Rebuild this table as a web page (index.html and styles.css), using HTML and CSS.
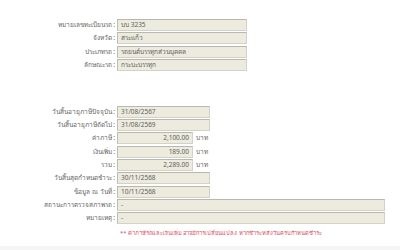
FILE: index.html
```html
<!DOCTYPE html>
<html lang="th">
<head>
<meta charset="utf-8">
<link rel="stylesheet" href="styles.css">
</head>
<body>
<div class="page">
  <div class="form">
    <div class="label">หมายเลขทะเบียนรถ :</div><div class="box w-130">บบ 3235</div>
    <div class="label">จังหวัด :</div><div class="box w-130">สระแก้ว</div>
    <div class="label">ประเภทรถ :</div><div class="box w-130">รถยนต์บรรทุกส่วนบุคคล</div>
    <div class="label">ลักษณะรถ :</div><div class="box w-130">กระบะบรรทุก</div>
  </div>

  <div class="form second">
    <div class="label">วันสิ้นอายุภาษีปัจจุบัน :</div><div class="box w-93">31/08/2567</div>
    <div class="label">วันสิ้นอายุภาษีถัดไป :</div><div class="box w-93">31/08/2569</div>
    <div class="label">ค่าภาษี :</div><div class="amount"><div class="box num">2,100.00</div><span class="unit">บาท</span></div>
    <div class="label">เงินเพิ่ม :</div><div class="amount"><div class="box num">189.00</div><span class="unit">บาท</span></div>
    <div class="label">รวม :</div><div class="amount"><div class="box num">2,289.00</div><span class="unit">บาท</span></div>
    <div class="label">วันสิ้นสุดกำหนดชำระ :</div><div class="box w-93">30/11/2568</div>
    <div class="label">ข้อมูล ณ วันที่ :</div><div class="box w-93">10/11/2568</div>
    <div class="label">สถานะการตรวจสภาพรถ :</div><div class="box w-268">-</div>
    <div class="label">หมายเหตุ :</div><div class="box w-268">-</div>
    <div></div><div class="note">** ค่าภาษีรถและเงินเพิ่ม อาจมีการเปลี่ยนแปลง หากชำระหลังวันครบกำหนดชำระ</div>
  </div>
  <div class="footer"></div>
</div>
</body>
</html>
```
FILE: styles.css
```css
html, body {
  margin: 0;
  padding: 0;
  background: #ffffff;
}
body {
  font-family: Tahoma, "Noto Sans", "DejaVu Sans", sans-serif;
  font-size: 6.5px;
  color: #666;
}
.page {
  width: 400px;
  height: 250px;
  overflow: hidden;
  padding-top: 19px;
  box-sizing: border-box;
  position: relative;
}
.form {
  display: grid;
  grid-template-columns: 115px auto;
  column-gap: 2px;
  row-gap: 1.3px;
  align-items: center;
}
.second {
  margin-top: 35px;
}
.label {
  text-align: right;
  white-space: nowrap;
  line-height: 12px;
}
.box {
  box-sizing: border-box;
  height: 12px;
  line-height: 10px;
  background: #ecebdd;
  border: 1px solid #d2d2c8;
  border-top-color: #b8b8b0;
  border-left-color: #bdbdb5;
  padding: 0 3px;
  white-space: nowrap;
  overflow: hidden;
  color: #5e5e5e;
}
.w-130 { width: 130px; }
.w-93 { width: 93px; }
.w-268 { width: 268px; }
.amount {
  display: flex;
  align-items: center;
  gap: 3px;
}
.num {
  width: 76px;
  text-align: right;
}
.unit {
  line-height: 12px;
}
.note {
  color: #d44a5a;
  padding-left: 3px;
  line-height: 15px;
  white-space: nowrap;
  font-size: 5.75px;
}
.footer {
  position: absolute;
  left: 0;
  right: 0;
  bottom: 0;
  height: 4px;
  background: #f5f5f5;
}
```
